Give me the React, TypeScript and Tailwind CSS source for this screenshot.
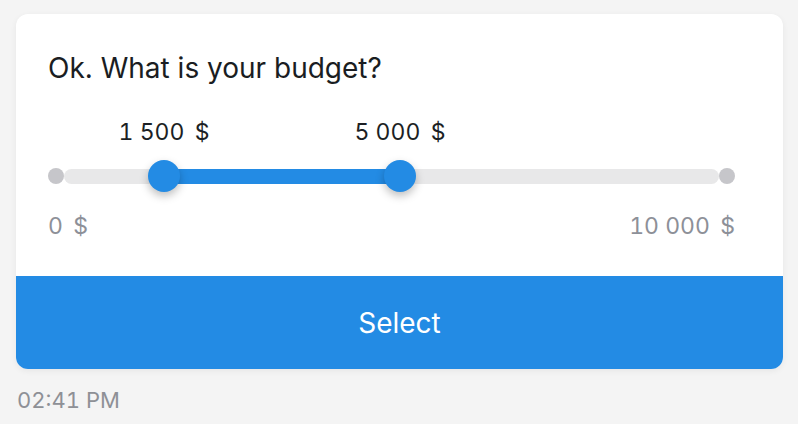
import React from "react";

const MIN = 0;
const MAX = 10000;

// thumb centre in px from the left end of the grey track (656px wide)
const toX = (v: number) => -1 + ((v - MIN) / (MAX - MIN)) * 674;

const fmt = (v: number) =>
  v.toString().replace(/\B(?=(\d{3})+(?!\d))/g, " ") + "\u00a0\u2009$";

const BudgetSlider: React.FC<{ low: number; high: number }> = ({ low, high }) => {
  const lo = toX(low);
  const hi = toX(high);

  return (
    <div className="flex flex-col">
      {/* value labels over the thumbs */}
      <div className="relative ml-4 h-10">
        {[low, high].map((v) => (
          <span
            key={v}
            className="absolute top-2 -translate-x-1/2 whitespace-nowrap text-[23px] leading-6 tabular-nums text-[#1c1f24]"
            style={{ left: toX(v) }}
          >
            {fmt(v)}
          </span>
        ))}
      </div>

      <div className="flex h-12 items-center">
        <div className="h-4 w-4 shrink-0 rounded-full bg-[#c6c6ca]" />
        <div className="relative h-[15px] flex-1 rounded-full bg-[#e8e8e9]">
          <div
            className="absolute inset-y-0 bg-[#238be4]"
            style={{ left: lo, width: hi - lo }}
          />
          {[lo, hi].map((x, i) => (
            <div
              key={i}
              className="absolute top-1/2 h-8 w-8 -translate-x-1/2 -translate-y-1/2 rounded-full bg-[#238be4] shadow-[0_4px_8px_rgba(0,0,0,0.25)]"
              style={{ left: x }}
            />
          ))}
        </div>
        <div className="h-4 w-4 shrink-0 rounded-full bg-[#c6c6ca]" />
      </div>
    </div>
  );
};

const App: React.FC = () => {
  return (
    <div className='min-h-screen bg-[#f4f4f4] pl-4 pr-[15px] pt-[14px] font-["Inter",sans-serif]'>
      <div className="overflow-hidden rounded-xl bg-white shadow-[0_2px_6px_rgba(0,0,0,0.06)]">
        <div className="flex flex-col pb-[38px] pl-8 pr-[48px] pt-[38px]">
          <h1 className="h-8 text-[28px] leading-8 text-[#1a1d22]">
            Ok. What is your budget?
          </h1>
          <div className="mt-[28px]">
            <BudgetSlider low={1500} high={5000} />
          </div>
          <div className="mt-[14px] flex h-6 items-center justify-between text-[23px] leading-6 tabular-nums text-[#8d9098]">
            <span>{fmt(MIN)}</span>
            <span>{fmt(MAX)}</span>
          </div>
        </div>
        <button
          type="button"
          className="flex h-[93px] w-full items-center justify-center bg-[#238be4] text-[28px] text-white"
        >
          Select
        </button>
      </div>
      <div className="mt-[19px] h-6 pl-px text-[22px] leading-6 tabular-nums text-[#8e9096]">
        02:41 PM
      </div>
    </div>
  );
};

export default App;
